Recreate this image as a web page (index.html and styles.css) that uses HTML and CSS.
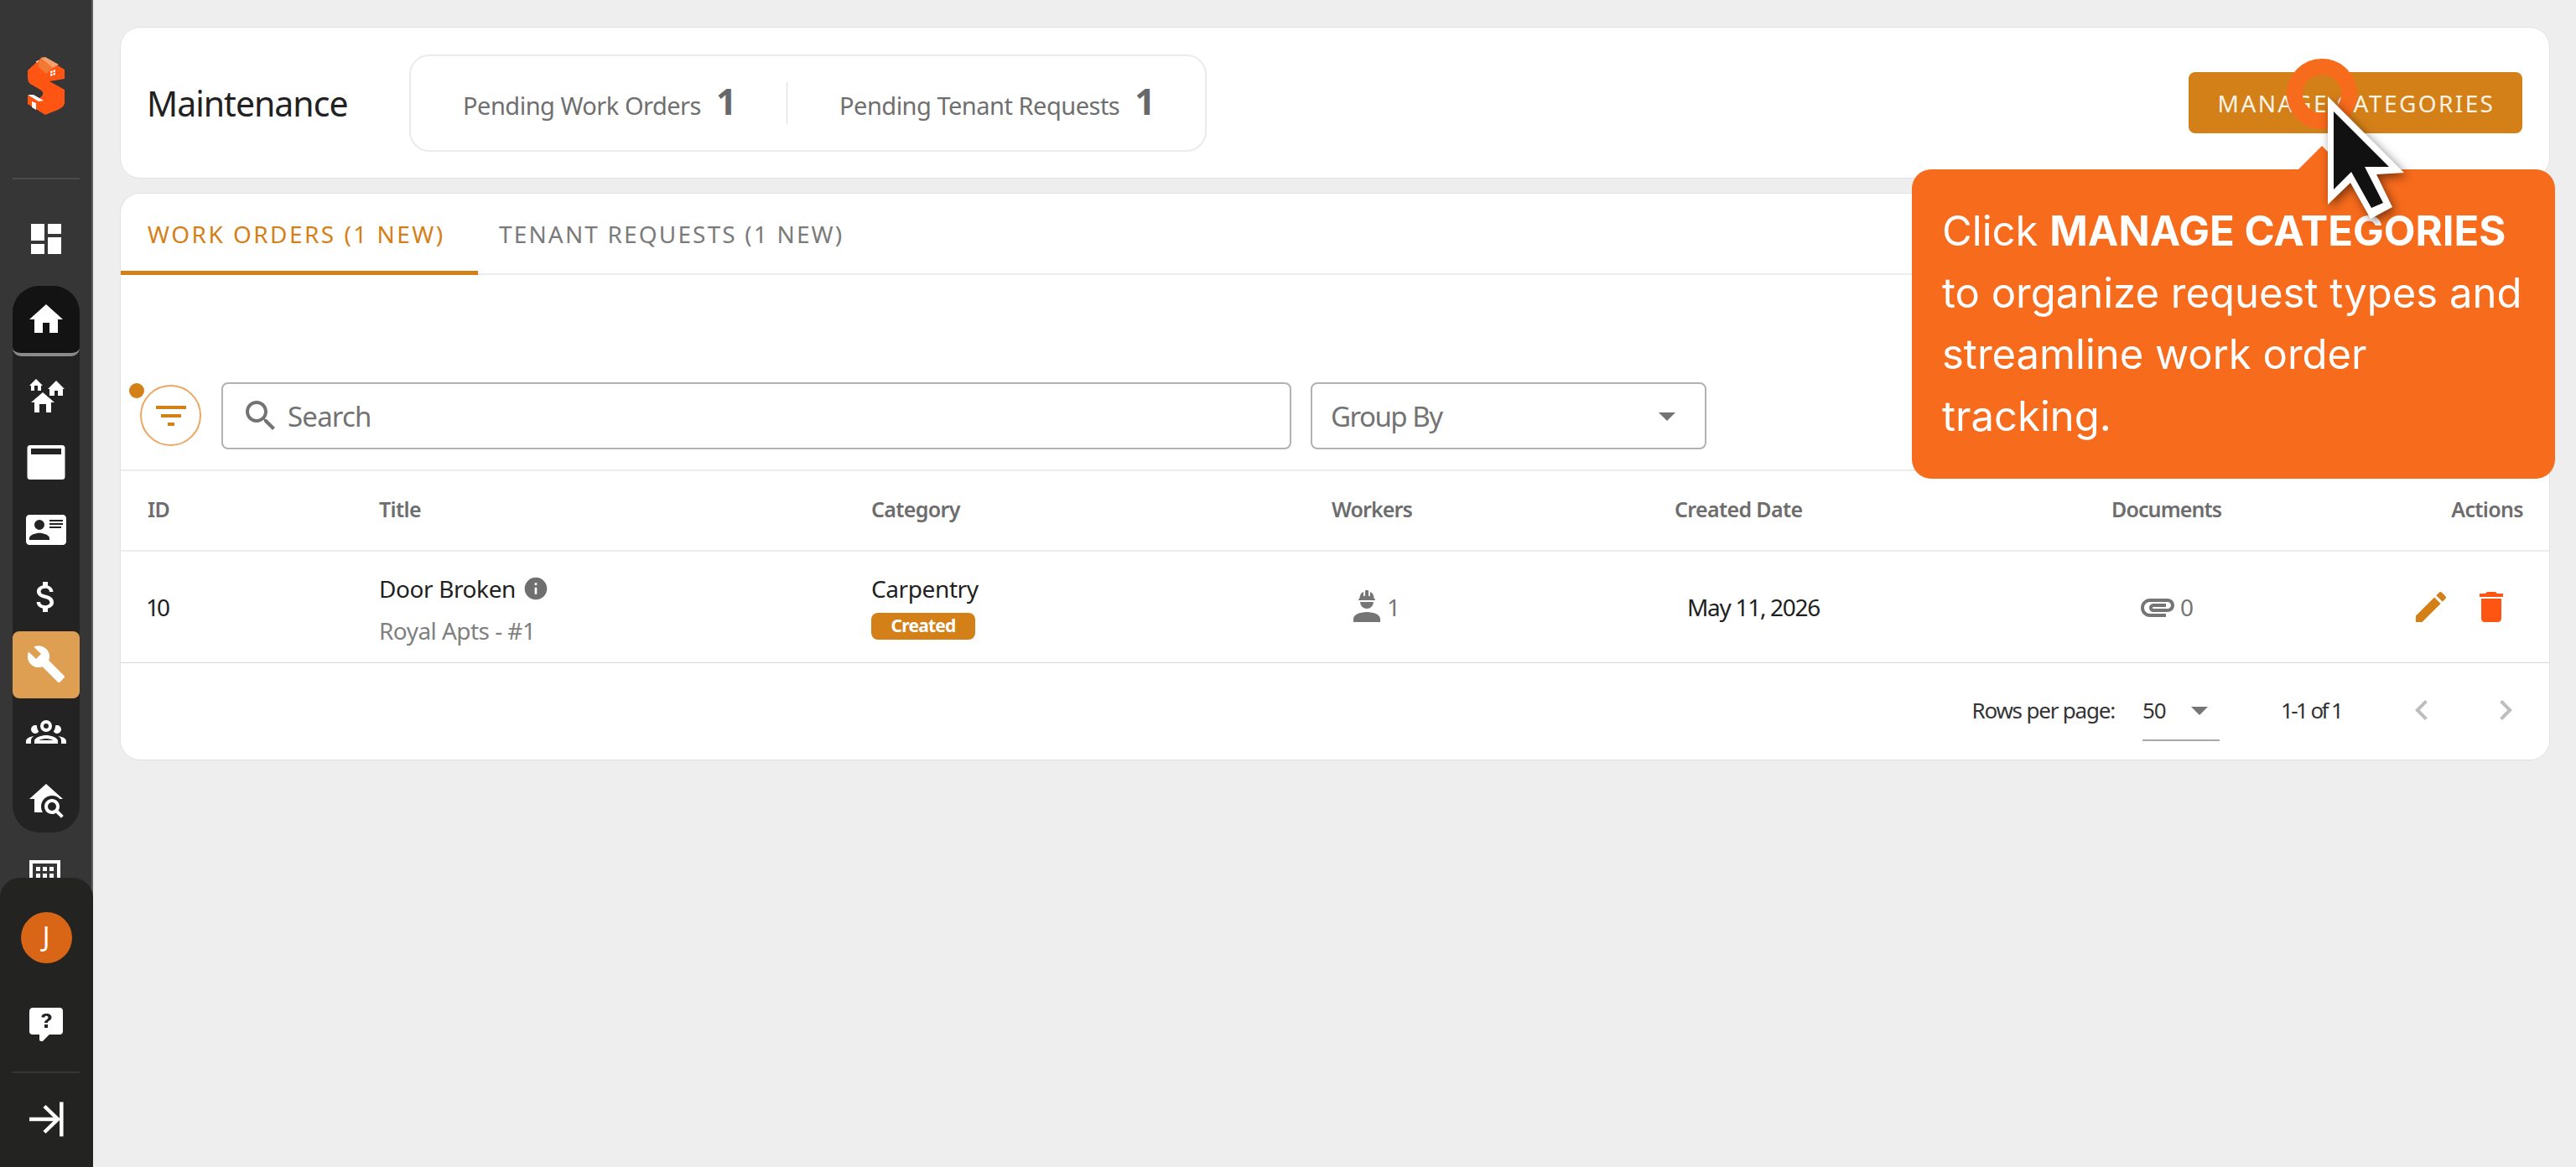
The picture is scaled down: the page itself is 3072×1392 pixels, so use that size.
FILE: index.html
```
<!DOCTYPE html>
<html lang="en">
<head>
    <meta charset="UTF-8">
    <title>Maintenance</title>
    <link rel="stylesheet" href="styles.css">
</head>
<body>
    <nav class="sidebar">
        <div class="logo">
            <svg width="48" height="70" viewBox="0 0 48 70">
                <path fill="#ff5512" d="M2 17L17 3l14 4 15 9v11l-12 2-6 1 18 10v15c0 6-5 8-23 15L2 57V47l14 3c5-3 6-7 1-10L5 33c-2-2-3-4-3-8z"/>
                <path fill="#f3a06c" d="M17 2l6-1 16 9-7 4z"/>
                <path fill="#f27a35" d="M17 3l15 11-8 7-10-9z"/>
                <path fill="#fff" d="M12 6l4-1-3 3zM29 18l6-2v6l-6 2zM2 46l7 0 12 7-6 1zM7 54l5 2v8l-5-3z"/>
                <path stroke="#ff5512" d="M32 16v8M29 21l6-2"/>
            </svg>
        </div>
        <hr class="side-line">
        <div class="side-top">
            <svg class="icon" viewBox="0 0 24 24"><path d="M3 13h8V3H3v10zm0 8h8v-6H3v6zm10 0h8V11h-8v10zm0-18v6h8V3h-8z"/></svg>
        </div>
        <div class="side-group">
            <a class="side-item side-home"><svg class="icon" viewBox="0 0 24 24"><path d="M10 20v-6h4v6h5v-8h3L12 3 2 12h3v8z"/></svg></a>
            <a class="side-item"><svg class="icon" viewBox="0 0 24 24"><path d="M17 16H15V22H12V17H8V22H5V16H3L10 10L17 16M6 2L10 6H9V9H7V6H5V9H3V6H2L6 2M18 3L23 8H22V12H19V9H17V12H14V8H13L18 3Z"/></svg></a>
            <a class="side-item"><svg class="icon" viewBox="0 0 48 48"><path fill-rule="evenodd" d="M5 3h38a3.500 3.500 0 0 1 3.500 3.500v34A3.500 3.500 0 0 1 43 44H5a3.500 3.500 0 0 1-3.500-3.500v-34A3.500 3.500 0 0 1 5 3zM6 7v7h36V7z"/></svg></a>
            <a class="side-item"><svg class="icon" viewBox="0 0 24 24"><path d="M2 3H22C23.050 3 24 3.950 24 5V19C24 20.050 23.050 21 22 21H2C.950 21 0 20.050 0 19V5C0 3.950 .950 3 2 3M14 6V7H22V6H14M14 8V9H22V8H14M14 10V11H21V10H14M8 13.910C6 13.910 2 15 2 17V18H14V17C14 15 10 13.910 8 13.910M8 6A3 3 0 0 0 5 9A3 3 0 0 0 8 12A3 3 0 0 0 11 9A3 3 0 0 0 8 6Z"/></svg></a>
            <a class="side-item"><svg class="icon" viewBox="0 0 24 24"><path d="M11.800 10.900c-2.270-.590-3-1.200-3-2.150 0-1.090 1.010-1.850 2.700-1.850 1.780 0 2.440.850 2.500 2.100h2.210c-.070-1.720-1.120-3.300-3.210-3.810V3h-3v2.160c-1.940.420-3.500 1.680-3.500 3.610 0 2.310 1.910 3.460 4.700 4.130 2.500.600 3 1.480 3 2.410 0 .690-.490 1.790-2.700 1.790-2.060 0-2.870-.920-2.980-2.100h-2.200c.120 2.190 1.760 3.420 3.680 3.830V21h3v-2.150c1.950-.370 3.500-1.500 3.500-3.550 0-2.840-2.430-3.810-4.700-4.400z"/></svg></a>
            <a class="side-item side-active"><svg class="icon" viewBox="0 0 24 24"><path d="M22.700 19l-9.100-9.100c.900-2.300.400-5-1.500-6.900-2-2-5-2.400-7.400-1.300L9 6 6 9 1.600 4.700C.400 7.100.900 10.100 2.900 12.100c1.900 1.900 4.600 2.400 6.900 1.500l9.100 9.100c.400.400 1 .400 1.400 0l2.300-2.300c.500-.400.500-1.100.100-1.400z"/></svg></a>
            <a class="side-item"><svg class="icon" viewBox="0 0 24 24"><path d="M12 5A3.500 3.500 0 0 0 8.500 8.500A3.500 3.500 0 0 0 12 12A3.500 3.500 0 0 0 15.500 8.500A3.500 3.500 0 0 0 12 5M12 7A1.500 1.500 0 0 1 13.500 8.500A1.500 1.500 0 0 1 12 10A1.500 1.500 0 0 1 10.500 8.500A1.500 1.500 0 0 1 12 7M5.500 8A2.500 2.500 0 0 0 3 10.500C3 11.440 3.530 12.250 4.290 12.680C4.650 12.880 5.060 13 5.500 13C5.940 13 6.350 12.880 6.710 12.680C7.080 12.470 7.390 12.170 7.620 11.810C6.890 10.860 6.500 9.700 6.500 8.500V8.220C6.200 8.080 5.860 8 5.500 8M18.500 8C18.140 8 17.800 8.080 17.500 8.220V8.500C17.500 9.700 17.110 10.860 16.380 11.810C16.630 12.150 16.940 12.480 17.290 12.680C17.650 12.880 18.060 13 18.500 13C18.940 13 19.350 12.880 19.710 12.680C20.470 12.250 21 11.440 21 10.500A2.500 2.500 0 0 0 18.500 8M12 14C9.660 14 5 15.170 5 17.500V19H19V17.500C19 15.170 14.340 14 12 14M4.710 14.550C2.780 14.780 0 15.760 0 17.500V19H3V17.070C3 16.060 3.690 15.220 4.710 14.550M19.290 14.550C20.310 15.220 21 16.060 21 17.070V19H24V17.500C24 15.760 21.220 14.780 19.290 14.550M12 16C13.530 16 15.240 16.500 16.230 17H7.770C8.760 16.500 10.470 16 12 16Z"/></svg></a>
            <a class="side-item"><svg class="icon" viewBox="0 0 24 24"><path d="M15.500 12C18 12 20 14 20 16.500C20 17.380 19.750 18.210 19.310 18.900L22.390 22L21 23.390L17.880 20.320C17.190 20.750 16.370 21 15.500 21C13 21 11 19 11 16.500C11 14 13 12 15.500 12M15.500 14A2.500 2.500 0 0 0 13 16.500A2.500 2.500 0 0 0 15.500 19A2.500 2.500 0 0 0 18 16.500A2.500 2.500 0 0 0 15.500 14M9 16.500C9 17.790 9.380 19 10 20H5V12H2L12 3L22 12H20.180C18.990 10.760 17.330 10 15.500 10C11.920 10 9 12.920 9 16.500Z"/></svg></a>
        </div>
        <div class="side-cut">
            <svg width="37" height="21" viewBox="0 0 37 21"><path fill="#fff" d="M0 0h37v21h-4V4H4v17H0zM8 8h5v5H8zM16 8h5v5h-5zM24 8h5v5h-5zM8 16h5v5H8zM16 16h5v5h-5zM24 16h5v5h-5z"/></svg>
        </div>
        <div class="side-bottom">
            <div class="avatar">J</div>
            <svg class="icon help" viewBox="0 0 24 24"><path fill-rule="evenodd" d="M4 2H20A2 2 0 0 1 22 4V16A2 2 0 0 1 20 18H13.900L10.200 21.710C10 21.900 9.750 22 9.500 22H9A1 1 0 0 1 8 21V18H4A2 2 0 0 1 2 16V4C2 2.890 2.900 2 4 2M12.190 5.500C11.300 5.500 10.590 5.680 10.050 6.040C9.500 6.400 9.220 7 9.270 7.690H11.240C11.240 7.410 11.340 7.200 11.500 7.060C11.700 6.920 11.920 6.850 12.190 6.850C12.500 6.850 12.770 6.930 12.950 7.110C13.130 7.280 13.220 7.500 13.220 7.800C13.220 8.080 13.140 8.330 13 8.540C12.830 8.760 12.620 8.940 12.360 9.080C11.840 9.400 11.500 9.680 11.290 9.920C11.100 10.160 11 10.500 11 11H13C13 10.720 13.050 10.500 13.140 10.320C13.230 10.150 13.400 10 13.660 9.850C14.120 9.640 14.500 9.360 14.790 9C15.080 8.630 15.230 8.240 15.230 7.800C15.230 7.100 14.960 6.540 14.420 6.120C13.880 5.710 13.130 5.500 12.190 5.500M11 12V14H13V12H11Z"/></svg>
            <hr class="side-line">
            <svg class="icon expand" viewBox="0 0 48 48"><path fill="none" stroke="#fff" stroke-width="4.500" d="M4 24h35M22 8.500L38 24 22 39.500M42.300 3.500v41"/></svg>
        </div>
    </nav>

    <main class="content">
        <header class="card header">
            <h1>Maintenance</h1>
            <div class="stats">
                <div class="stat"><span>Pending Work Orders</span><b>1</b></div>
                <div class="stat-line"></div>
                <div class="stat"><span>Pending Tenant Requests</span><b>1</b></div>
            </div>
            <button class="manage">MANAGE CATEGORIES</button>
        </header>

        <section class="card orders">
            <div class="tabs">
                <a class="tab tab-active">WORK ORDERS (1 NEW)</a>
                <a class="tab tab-requests">TENANT REQUESTS (1 NEW)</a>
            </div>
            <div class="toolbar">
                <button class="filter">
                    <svg class="icon" viewBox="0 0 24 24"><path d="M10 18h4v-2h-4v2zM3 6v2h18V6H3zm3 7h12v-2H6v2z"/></svg>
                    <i class="dot"></i>
                </button>
                <div class="field search">
                    <svg class="icon" viewBox="0 0 24 24"><path d="M15.500 14h-.790l-.280-.270C15.410 12.590 16 11.110 16 9.500 16 5.910 13.090 3 9.500 3S3 5.910 3 9.500 5.910 16 9.500 16c1.610 0 3.090-.590 4.230-1.570l.270.280v.790l5 4.990L20.490 19l-4.990-5zm-6 0C7.010 14 5 11.990 5 9.500S7.010 5 9.500 5 14 7.010 14 9.500 11.990 14 9.500 14z"/></svg>
                    <span>Search</span>
                </div>
                <div class="field group-by">
                    <span>Group By</span>
                    <svg class="icon" viewBox="0 0 24 24"><path d="M7 10l5 5 5-5z"/></svg>
                </div>
            </div>

            <div class="row table-head">
                <div>ID</div>
                <div>Title</div>
                <div>Category</div>
                <div class="h-workers">Workers</div>
                <div>Created Date</div>
                <div class="h-docs">Documents</div>
                <div class="h-actions">Actions</div>
            </div>
            <div class="row table-row">
                <div class="c-id">10</div>
                <div class="c-title">
                    <div class="c-name">Door Broken <svg class="icon" viewBox="0 0 24 24"><path d="M12 2C6.480 2 2 6.480 2 12s4.480 10 10 10 10-4.480 10-10S17.520 2 12 2zm1 15h-2v-6h2v6zm0-8h-2V7h2v2z"/></svg></div>
                    <div class="c-unit">Royal Apts - #1</div>
                </div>
                <div class="c-category">
                    <div>Carpentry</div>
                    <span class="badge">Created</span>
                </div>
                <div class="c-workers">
                    <svg class="icon" viewBox="0 0 24 24"><path d="M12 15C7.580 15 4 16.790 4 19V21H20V19C20 16.790 16.420 15 12 15M8 9A4 4 0 0 0 12 13A4 4 0 0 0 16 9M11.500 2C11.200 2 11 2.210 11 2.500V5.500H10V3C10 3 7.750 3.860 7.750 6.750C7.750 6.750 7 6.890 7 8H17C16.950 6.890 16.250 6.750 16.250 6.750C16.250 3.860 14 3 14 3V5.500H13V2.500C13 2.210 12.810 2 12.500 2H11.500Z"/></svg>
                    <span>1</span>
                </div>
                <div class="c-date">May 11, 2026</div>
                <div class="c-docs">
                    <svg class="icon" viewBox="0 0 24 24"><path d="M2 12.500C2 9.460 4.460 7 7.500 7H18c2.210 0 4 1.790 4 4s-1.790 4-4 4H9.500C8.120 15 7 13.880 7 12.500S8.120 10 9.500 10H17v2H9.410c-.550 0-.550 1 0 1H18c1.100 0 2-.900 2-2s-.900-2-2-2H7.500C5.570 9 4 10.570 4 12.500S5.570 16 7.500 16H17v2H7.500C4.460 18 2 15.540 2 12.500z"/></svg>
                    <span>0</span>
                </div>
                <div class="c-actions">
                    <svg class="icon edit" viewBox="0 0 24 24"><path d="M3 17.250V21h3.750L17.810 9.940l-3.750-3.750L3 17.250zM20.710 7.040c.390-.390.390-1.020 0-1.410l-2.340-2.340c-.390-.390-1.020-.390-1.410 0l-1.830 1.830 3.750 3.750 1.830-1.830z"/></svg>
                    <svg class="icon delete" viewBox="0 0 24 24"><path d="M6 19c0 1.100.900 2 2 2h8c1.100 0 2-.900 2-2V7H6v12zM19 4h-3.500l-1-1h-5l-1 1H5v2h14V4z"/></svg>
                </div>
            </div>

            <div class="pager">
                <span class="pager-label">Rows per page:</span>
                <div class="pager-select">
                    <span>50</span>
                    <svg class="icon" viewBox="0 0 24 24"><path d="M7 10l5 5 5-5z"/></svg>
                </div>
                <span class="pager-range">1-1 of 1</span>
                <svg class="icon prev" viewBox="0 0 24 24"><path d="M15.410 7.410L14 6l-6 6 6 6 1.410-1.410L10.830 12z"/></svg>
                <svg class="icon next" viewBox="0 0 24 24"><path d="M10 6L8.590 7.410 13.170 12l-4.580 4.590L10 18l6-6z"/></svg>
            </div>
        </section>
    </main>

    <div class="callout">Click <b>MANAGE CATEGORIES</b> to organize request types and streamline work order tracking.</div>
    <div class="ring"></div>
    <svg class="cursor" width="140" height="190" viewBox="0 0 140 190">
        <path fill="#fff" d="M26 15L117 106 84 108 103 147 77 161 53 118 26 144z"/>
        <path fill="#111" d="M33 33L99 99H70L92 142 78 148 54 105 33 126z"/>
    </svg>
</body>
</html>
```
FILE: styles.css
```
* {
    box-sizing: border-box;
}

body {
    margin: 0;
    height: 1392px;
    display: flex;
    position: relative;
    overflow: hidden;
    background-color: #eeeeee;
    color: #212121;
    font-family: "Noto Sans", sans-serif;
    font-size: 28px;
}

.icon {
    width: 48px;
    height: 48px;
    flex: none;
    display: block;
    fill: currentColor;
}

/* sidebar */
.sidebar {
    width: 111px;
    height: 1392px;
    flex: none;
    display: flex;
    flex-direction: column;
    align-items: center;
    padding-right: 1px;
    background-color: #363636;
    box-shadow: inset -2px 0 #5c5e5c;
    color: #ffffff;
}

.logo {
    height: 212px;
    padding-top: 67px;
}

.side-line {
    width: 80px;
    height: 2px;
    margin: 0;
    border: none;
    background-color: #4c4c4c;
}

.side-top {
    height: 127px;
    padding-top: 47px;
}

.side-group {
    width: 80px;
    height: 652px;
    border-radius: 32px;
    background-color: #232323;
}

.side-item {
    display: flex;
    align-items: center;
    justify-content: center;
    height: 80.2px;
    padding-bottom: 1px;
}

.side-home {
    height: 84px;
    margin-bottom: 7px;
    padding-bottom: 0;
    background-color: #131313;
    border-bottom: 4px solid #8a8a8a;
    border-radius: 32px 32px 10px 10px;
}

.side-active {
    background-color: #df9f52;
    border-radius: 8px;
}

.side-cut {
    height: 54px;
    width: 110px;
    padding: 33px 0 0 35px;
}

.side-cut svg {
    display: block;
}

.side-bottom {
    width: 111px;
    margin-right: -1px;
    padding-right: 1px;
    flex: 1;
    display: flex;
    flex-direction: column;
    align-items: center;
    background-color: #232422;
    border-radius: 24px 24px 0 0;
}

.side-bottom .side-line {
    background-color: #373835;
}

.avatar {
    width: 61px;
    height: 61px;
    margin-top: 41px;
    border-radius: 50%;
    background-color: #d96517;
    line-height: 58px;
    text-align: center;
    font-size: 32px;
}

.help {
    margin: 49px 0 32px;
}

.expand {
    margin-top: 31px;
}

/* cards */
.content {
    flex: 1;
    padding: 32px 31px 0 32px;
}

.card {
    background-color: #ffffff;
    border: 1px solid #e2e2e2;
    border-radius: 24px;
}

.header {
    height: 181px;
    display: flex;
    align-items: center;
    padding: 0 32px 0 31px;
}

.header h1 {
    width: 313px;
    margin: 0;
    font-size: 41px;
    font-weight: 400;
    letter-spacing: -1px;
}

.stats {
    width: 951px;
    height: 116px;
    display: flex;
    align-items: center;
    padding-left: 62px;
    border: 2px solid #ebebeb;
    border-radius: 24px;
    color: #6f6f6f;
}

.stat {
    display: flex;
    align-items: baseline;
    padding-bottom: 5px;
    font-size: 29px;
    letter-spacing: -0.5px;
}

.stat b {
    width: 24px;
    margin-left: 18px;
    font-size: 43px;
    color: #66686a;
}

.stat-line {
    width: 1px;
    height: 50px;
    margin: 0 62px 0 60px;
    background-color: #dcdcdc;
}

.manage {
    width: 398px;
    height: 73px;
    margin-left: auto;
    padding: 0 0 0 2px;
    border: none;
    border-radius: 8px;
    background-color: #d48019;
    color: #fff3e4;
    font: 28px "Noto Sans", sans-serif;
    letter-spacing: 2.4px;
}

.orders {
    height: 677px;
    margin-top: 17px;
}

.tabs {
    height: 97px;
    display: flex;
    border-bottom: 2px solid #ededed;
}

.tab {
    height: 97px;
    line-height: 96px;
    color: #7b7b7b;
    letter-spacing: 2.15px;
    padding-left: 25px;
}

.tab-active {
    width: 426px;
    padding-left: 32px;
    border-bottom: 5px solid #d48019;
    color: #d48019;
    letter-spacing: 2.45px;
}

/* toolbar */
.toolbar {
    height: 232px;
    display: flex;
    align-items: flex-start;
    padding: 128px 24px 0;
}

.filter {
    position: relative;
    width: 73px;
    height: 73px;
    margin: 3px 24px 0 -1px;
    padding: 0 0 0 11px;
    border: 2px solid #eda764;
    border-radius: 50%;
    background: none;
    color: #d48019;
}

.dot {
    position: absolute;
    left: -15px;
    top: -4px;
    width: 18px;
    height: 18px;
    border-radius: 50%;
    background-color: #d48019;
}

.field {
    height: 80px;
    display: flex;
    align-items: center;
    border: 2px solid #b2b2b2;
    border-radius: 8px;
    color: #737373;
    font-size: 33px;
    letter-spacing: -0.8px;
}

.search {
    width: 1276px;
    padding-left: 21px;
}

.search span {
    margin-left: 8px;
}

.group-by {
    width: 472px;
    margin-left: 23px;
    padding: 0 21px 0 22px;
    justify-content: space-between;
    letter-spacing: -1.5px;
}

/* table */
.row {
    display: grid;
    grid-template-columns: 276px 587px 549px 409px 521px 260px 1fr;
    padding: 0 31px 0 32px;
    border-top: 2px solid #ededed;
}

.table-head {
    height: 96px;
    align-items: center;
    padding-bottom: 5px;
    color: #6d6d6d;
    font-size: 25px;
    font-weight: 600;
    letter-spacing: -0.65px;
}

.h-workers {
    letter-spacing: -0.9px;
}

.h-docs {
    letter-spacing: -0.9px;
}

.h-actions {
    text-align: right;
}

.table-row {
    height: 135px;
    align-items: center;
    border-bottom: 1px solid #d6d6d6;
}

.c-id {
    letter-spacing: -3px;
    margin-left: -2px;
}

.c-title,
.c-category {
    padding-top: 6px;
    line-height: 50px;
    letter-spacing: -0.4px;
}

.c-name {
    display: flex;
    align-items: center;
    gap: 8px;
}

.c-name .icon {
    width: 32px;
    height: 32px;
    color: #6f6f6f;
}

.c-unit {
    color: #808080;
    letter-spacing: -0.55px;
}

.c-category {
    height: 106px;
}

.badge {
    display: block;
    width: 124px;
    height: 32px;
    margin-top: 4px;
    border-radius: 8px;
    background-color: #d48019;
    color: #ffffff;
    line-height: 31px;
    text-align: center;
    font-size: 21px;
    font-weight: 700;
    letter-spacing: -0.8px;
}

.c-workers,
.c-docs {
    display: flex;
    align-items: center;
    color: #757575;
}

.c-workers {
    padding-left: 18px;
}

.c-date {
    padding-left: 15px;
    letter-spacing: -1.3px;
}

.c-docs {
    padding-left: 31px;
}

.c-docs span {
    margin-left: 3px;
}

.c-actions {
    display: flex;
    justify-content: flex-end;
    gap: 24px;
    padding-right: 14px;
    margin-left: -20px;
}

.edit {
    color: #d48019;
}

.delete {
    color: #ff5512;
}

/* pager */
.pager {
    display: flex;
    align-items: center;
    justify-content: flex-end;
    height: 112px;
    font-size: 26px;
    color: #333333;
}

.pager-label {
    letter-spacing: -1.2px;
}

.pager-select {
    width: 92px;
    height: 72px;
    display: flex;
    align-items: center;
    margin: 2px 0 0 33px;
    border-bottom: 2px solid #a8a8a8;
    letter-spacing: -1px;
}

.pager-select .icon {
    margin-left: 16px;
    color: #757575;
}

.pager-range {
    width: 67px;
    margin-left: 73px;
    white-space: nowrap;
    letter-spacing: -2.6px;
    word-spacing: 1px;
}

.prev,
.next {
    color: #bdbdbd;
}

.prev {
    margin-left: 77px;
}

.next {
    margin: 0 28px 0 52px;
}

/* guide overlay */
.callout {
    position: absolute;
    left: 2280px;
    top: 202px;
    width: 767px;
    height: 369px;
    padding: 37px 30px 0 36px;
    border-radius: 23px;
    background-color: #f76b1c;
    color: #ffffff;
    font: 49px/73.5px Inter, sans-serif;
}

.callout::before {
    content: "";
    position: absolute;
    left: 460px;
    top: -28px;
    border: 29px solid transparent;
    border-top: none;
    border-bottom-color: #f76b1c;
}

.ring {
    position: absolute;
    left: 2727px;
    top: 70px;
    width: 84px;
    height: 84px;
    border: 19px solid #f76b1c;
    border-radius: 50%;
}

.cursor {
    position: absolute;
    left: 2750px;
    top: 100px;
    filter: drop-shadow(3px 4px 6px rgba(0, 0, 0, 0.5));
}
```
